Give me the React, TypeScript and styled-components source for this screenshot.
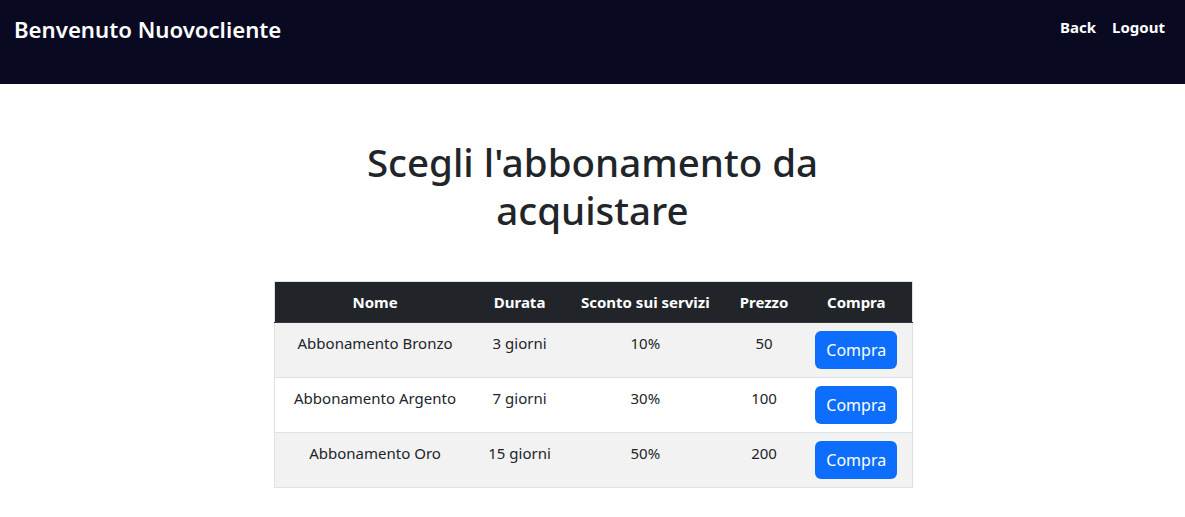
import React from "react";
import styled, { createGlobalStyle } from "styled-components";

const GlobalStyle = createGlobalStyle`
  html, body { margin: 0; padding: 0; background: #fff; }
  body {
    font-family: "Segoe UI", "Noto Sans", "Liberation Sans", sans-serif;
    color: #212529;
    font-size: 16px;
    line-height: 1.5;
  }
  * { box-sizing: border-box; }
`;

const TopBar = styled.header`
  height: 84px;
  background: #090a22;
  display: flex;
  justify-content: space-between;
  align-items: flex-start;
  padding: 0 20px 0 14px;
`;

const Brand = styled.div`
  color: #fff;
  font-size: 22.2px;
  font-weight: 600;
  line-height: 30px;
  margin-top: 15px;
`;

const NavLinks = styled.nav`
  display: flex;
  gap: 16px;
  margin-top: 15px;
`;

const NavLink = styled.a`
  color: #fff;
  font-weight: 700;
  font-size: 15px;
  line-height: 24px;
  text-decoration: none;
  cursor: pointer;
`;

const Main = styled.main`
  display: flex;
  flex-direction: column;
  align-items: center;
  padding-top: 54px;
`;

const Title = styled.h1`
  margin: 0 0 47px;
  max-width: 520px;
  text-align: center;
  font-size: 38.5px;
  font-weight: 500;
  line-height: 48px;
  color: #212529;
`;

const Table = styled.table`
  width: 639px;
  margin-left: 1px;
  border-collapse: collapse;
  border: 1px solid #dee2e6;
  text-align: center;
`;

const HeadCell = styled.th<{ $w: number }>`
  width: ${(p) => p.$w}px;
  background: #212529;
  color: #fff;
  font-weight: 700;
  font-size: 15px;
  padding: 8px;
  line-height: 24px;
  height: 41px;
  border-bottom: 1px solid #32383e;
`;

const Row = styled.tr<{ $striped: boolean }>`
  background: ${(p) => (p.$striped ? "#f2f2f2" : "#fff")};
  border-bottom: 1px solid #dee2e6;
`;

const Cell = styled.td`
  padding: 8px;
  vertical-align: top;
  font-size: 15px;
  line-height: 24px;
  color: #212529;
`;

const BuyButton = styled.button`
  display: inline-block;
  height: 38px;
  width: 82px;
  padding: 0;
  border: none;
  border-radius: 6px;
  background: #0d6efd;
  color: #fff;
  font-family: inherit;
  font-size: 16px;
  cursor: pointer;
`;

const columns = [
  { label: "Nome", w: 202 },
  { label: "Durata", w: 88 },
  { label: "Sconto sui servizi", w: 164 },
  { label: "Prezzo", w: 74 },
  { label: "Compra", w: 111 },
];

const plans = [
  { name: "Abbonamento Bronzo", days: "3 giorni", discount: "10%", price: "50" },
  { name: "Abbonamento Argento", days: "7 giorni", discount: "30%", price: "100" },
  { name: "Abbonamento Oro", days: "15 giorni", discount: "50%", price: "200" },
];

export default function App() {
  return (
    <>
      <GlobalStyle />
      <TopBar>
        <Brand>Benvenuto Nuovocliente</Brand>
        <NavLinks>
          <NavLink>Back</NavLink>
          <NavLink>Logout</NavLink>
        </NavLinks>
      </TopBar>
      <Main>
        <Title>Scegli l'abbonamento da acquistare</Title>
        <Table>
          <thead>
            <tr>
              {columns.map((c) => (
                <HeadCell key={c.label} $w={c.w}>
                  {c.label}
                </HeadCell>
              ))}
            </tr>
          </thead>
          <tbody>
            {plans.map((p, i) => (
              <Row key={p.name} $striped={i % 2 === 0}>
                <Cell>{p.name}</Cell>
                <Cell>{p.days}</Cell>
                <Cell>{p.discount}</Cell>
                <Cell>{p.price}</Cell>
                <Cell>
                  <BuyButton>Compra</BuyButton>
                </Cell>
              </Row>
            ))}
          </tbody>
        </Table>
      </Main>
    </>
  );
}
